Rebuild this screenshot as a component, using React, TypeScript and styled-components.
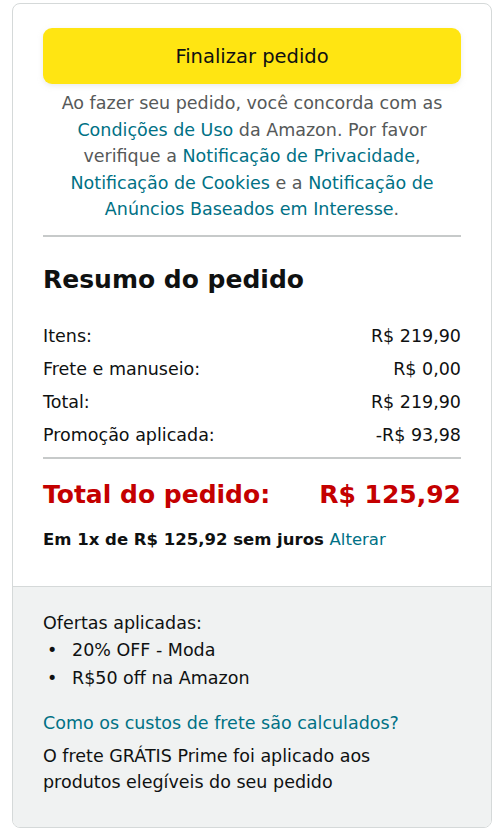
import { FC } from 'react';
import styled, { createGlobalStyle } from 'styled-components';

const GlobalStyle = createGlobalStyle`
  body {
    margin: 0;
    background: #ffffff;
    font-family: 'DejaVu Sans', 'Noto Sans', sans-serif;
    color: #0f1111;
  }
`;

type Line = { label: string; value: string };

const lines: Line[] = [
  { label: 'Itens:', value: 'R$ 219,90' },
  { label: 'Frete e manuseio:', value: 'R$ 0,00' },
  { label: 'Total:', value: 'R$ 219,90' },
  { label: 'Promoção aplicada:', value: '-R$ 93,98' }
];

const offers = ['20% OFF - Moda', 'R$50 off na Amazon'];

const Page = styled.div`
  padding: 3px 8px 10px 12px;
`;

const Card = styled.div`
  border: 1px solid #d5d9d9;
  border-radius: 8px;
  overflow: hidden;
  background: #fff;
`;

const Top = styled.div`
  padding: 24px 30px 35px 30px;
`;

const PlaceButton = styled.button`
  display: block;
  width: 100%;
  height: 56px;
  border: none;
  border-radius: 9px;
  background: #ffe512;
  box-shadow: 0 2px 5px rgba(213, 217, 217, 0.5);
  font-family: inherit;
  font-size: 19.5px;
  color: #0f1111;
`;

const Legal = styled.p`
  margin: 6px 0 0;
  text-align: center;
  font-size: 17.5px;
  line-height: 26.5px;
  color: #565959;
  a {
    color: #007185;
    text-decoration: none;
  }
`;

const Divider = styled.hr<{ $gap: number }>`
  border: none;
  border-top: 2px solid #c7caca;
  margin: ${p => p.$gap}px 0 0;
`;

const Heading = styled.h2`
  margin: 28px 0 25px;
  font-size: 25px;
  font-weight: 700;
  line-height: 30px;
`;

const Row = styled.div`
  display: flex;
  justify-content: space-between;
  font-size: 17.5px;
  line-height: 33px;
`;

const GrandTotal = styled.div`
  display: flex;
  justify-content: space-between;
  margin-top: 19px;
  font-size: 25px;
  font-weight: 700;
  line-height: 34px;
  color: #c40000;
`;

const Installment = styled.div`
  margin-top: 17px;
  font-size: 16.5px;
  font-weight: 700;
  line-height: 22px;
  a {
    font-weight: 400;
    color: #007185;
    text-decoration: none;
  }
`;

const Bottom = styled.div`
  background: #f0f2f2;
  border-top: 1px solid #d5d9d9;
  padding: 23px 30px 31px 30px;
  font-size: 17.5px;
  line-height: 26.5px;
`;

const OfferList = styled.ul`
  margin: 0 0 18px;
  padding: 0;
  list-style: none;
  line-height: 28px;
`;

const Offer = styled.li`
  display: flex;
  &::before {
    content: '•';
    width: 25px;
    padding-left: 4px;
    flex: none;
  }
`;

const ShipLink = styled.a`
  display: block;
  color: #007185;
  text-decoration: none;
  margin-bottom: 6px;
`;

const PrimeNote = styled.p`
  margin: 0;
  max-width: 350px;
`;

const App: FC = () => {
  return (
    <Page>
      <GlobalStyle />
      <Card>
        <Top>
          <PlaceButton>Finalizar pedido</PlaceButton>
          <Legal>
            Ao fazer seu pedido, você concorda com as{' '}
            <a href="#">Condições de Uso</a> da Amazon. Por favor verifique a{' '}
            <a href="#">Notificação de Privacidade</a>,{' '}
            <a href="#">Notificação de Cookies</a> e a{' '}
            <a href="#">Notificação de Anúncios Baseados em Interesse</a>.
          </Legal>
          <Divider $gap={12} />
          <Heading>Resumo do pedido</Heading>
          {lines.map(line => (
            <Row key={line.label}>
              <span>{line.label}</span>
              <span>{line.value}</span>
            </Row>
          ))}
          <Divider $gap={5} />
          <GrandTotal>
            <span>Total do pedido:</span>
            <span>R$ 125,92</span>
          </GrandTotal>
          <Installment>
            Em 1x de R$ 125,92 sem juros <a href="#">Alterar</a>
          </Installment>
        </Top>
        <Bottom>
          <div>Ofertas aplicadas:</div>
          <OfferList>
            {offers.map(offer => (
              <Offer key={offer}>{offer}</Offer>
            ))}
          </OfferList>
          <ShipLink href="#">Como os custos de frete são calculados?</ShipLink>
          <PrimeNote>
            O frete GRÁTIS Prime foi aplicado aos produtos elegíveis do seu
            pedido
          </PrimeNote>
        </Bottom>
      </Card>
    </Page>
  );
};

export default App;
